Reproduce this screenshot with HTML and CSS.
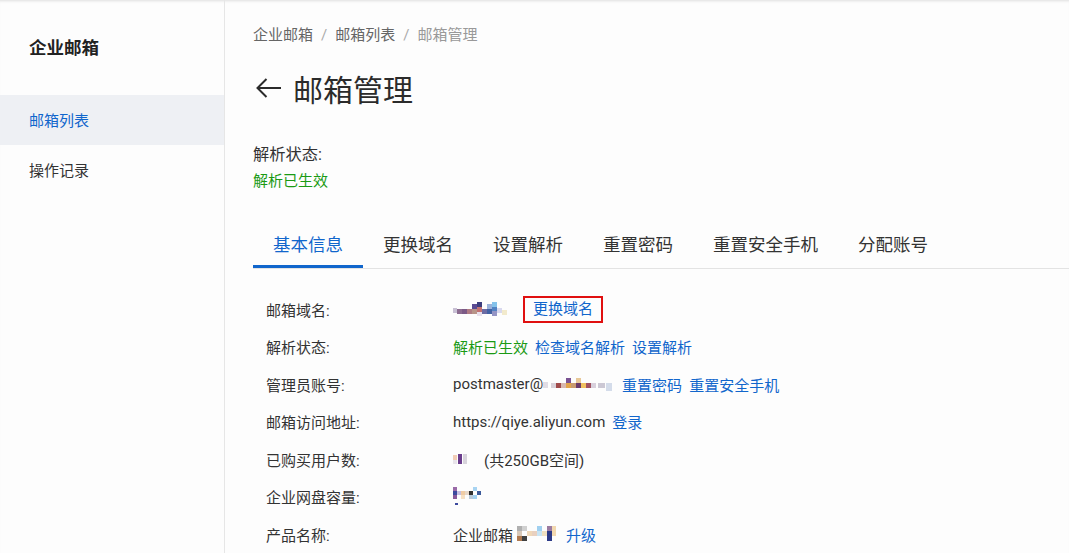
FILE: index.html
```html
<!DOCTYPE html>
<html lang="zh-CN">
<head>
	<meta charset="utf-8">
	<title>邮箱管理</title>
	<link rel="stylesheet" href="styles.css">
</head>
<body>
<div id="app">

	<div id="sidebar">
		<div class="side-title">企业邮箱</div>
		<div class="side-item active">邮箱列表</div>
		<div class="side-item">操作记录</div>
	</div>

	<div id="main">
		<div class="crumbs">
			<span class="crumb">企业邮箱</span><span class="sep">/</span><span class="crumb">邮箱列表</span><span class="sep">/</span><span class="crumb last">邮箱管理</span>
		</div>

		<div class="page-title">
			<svg class="back" width="26" height="22" viewBox="0 0 26 22"><path d="M26 11H2.5M11.5 2L2.5 11L11.5 20" fill="none" stroke="#2b2b2b" stroke-width="2"/></svg>
			<span>邮箱管理</span>
		</div>

		<div class="status-label">解析状态:</div>
		<div class="status-ok">解析已生效</div>

		<div class="tabs">
			<div class="tab active">基本信息</div>
			<div class="tab">更换域名</div>
			<div class="tab">设置解析</div>
			<div class="tab">重置密码</div>
			<div class="tab">重置安全手机</div>
			<div class="tab">分配账号</div>
		</div>

		<div class="info">
			<div class="row">
				<div class="label">邮箱域名:</div>
				<div class="value">
					<svg class="blur" width="62" height="16" viewBox="0 0 62 16">
						<rect x="0" y="7" width="4" height="5" fill="#c8c0d4"/>
						<rect x="4" y="8" width="5" height="5" fill="#8c6c90"/>
						<rect x="9" y="8" width="5" height="5" fill="#7c5a86"/>
						<rect x="14" y="8" width="5" height="5" fill="#b07c84"/>
						<rect x="19" y="3" width="5" height="5" fill="#5a4a92"/>
						<rect x="19" y="8" width="5" height="5" fill="#b89488"/>
						<rect x="24" y="1" width="5" height="5" fill="#3c3c7c"/>
						<rect x="24" y="6" width="5" height="5" fill="#c47272"/>
						<rect x="24" y="11" width="5" height="4" fill="#e8e0ec"/>
						<rect x="29" y="8" width="5" height="5" fill="#6c6ca4"/>
						<rect x="34" y="3" width="5" height="5" fill="#9cb2da"/>
						<rect x="34" y="8" width="5" height="5" fill="#4262a4"/>
						<rect x="39" y="1" width="5" height="5" fill="#84c2ea"/>
						<rect x="39" y="6" width="5" height="4" fill="#5282c2"/>
						<rect x="39" y="10" width="5" height="5" fill="#9494c4"/>
						<rect x="44" y="7" width="5" height="5" fill="#d8d8ee"/>
						<rect x="49" y="9" width="5" height="5" fill="#f2eacc"/>
					</svg>
					<span class="link boxed">更换域名</span>
				</div>
			</div>
			<div class="row">
				<div class="label">解析状态:</div>
				<div class="value">
					<span class="ok">解析已生效</span>
					<span class="link">检查域名解析</span>
					<span class="link">设置解析</span>
				</div>
			</div>
			<div class="row">
				<div class="label">管理员账号:</div>
				<div class="value">
					<span>postmaster@</span><svg class="blur tight" width="72" height="16" viewBox="0 0 72 16">
						<rect x="0" y="6" width="5" height="6" fill="#e0dce4"/>
						<rect x="8" y="7" width="5" height="5" fill="#d8d0d8"/>
						<rect x="13" y="7" width="5" height="5" fill="#a04a4a"/>
						<rect x="18" y="7" width="5" height="5" fill="#d8b8b0"/>
						<rect x="23" y="2" width="5" height="5" fill="#7a5292"/>
						<rect x="23" y="7" width="5" height="5" fill="#e2a44a"/>
						<rect x="28" y="7" width="5" height="5" fill="#c89a70"/>
						<rect x="33" y="2" width="5" height="5" fill="#e8c898"/>
						<rect x="33" y="7" width="5" height="5" fill="#6a3a6a"/>
						<rect x="38" y="7" width="5" height="5" fill="#f0c060"/>
						<rect x="43" y="7" width="5" height="5" fill="#a05060"/>
						<rect x="48" y="7" width="5" height="5" fill="#d8d0dc"/>
						<rect x="55" y="7" width="7" height="5" fill="#ccc8d4"/>
						<rect x="63" y="7" width="6" height="8" fill="#d4dcea"/>
					</svg>
					<span class="link">重置密码</span>
					<span class="link">重置安全手机</span>
				</div>
			</div>
			<div class="row">
				<div class="label">邮箱访问地址:</div>
				<div class="value">
					<span>https://qiye.aliyun.com</span>
					<span class="link">登录</span>
				</div>
			</div>
			<div class="row">
				<div class="label">已购买用户数:</div>
				<div class="value">
					<svg class="blur" width="16" height="16" viewBox="0 0 16 16">
						<rect x="0" y="4" width="4" height="5" fill="#f2cdb6"/>
						<rect x="0" y="9" width="4" height="4" fill="#e8e4ea"/>
						<rect x="5" y="3" width="4" height="10" fill="#6a3c8c"/>
						<rect x="10" y="3" width="4" height="10" fill="#d8d4dc"/>
					</svg>
					<span class="paren">(共250GB空间)</span>
				</div>
			</div>
			<div class="row">
				<div class="label">企业网盘容量:</div>
				<div class="value">
					<svg class="blur" width="30" height="20" viewBox="0 0 30 20">
						<rect x="0" y="0" width="4" height="4" fill="#9a6aa8"/>
						<rect x="0" y="4" width="4" height="4" fill="#3c4a9e"/>
						<rect x="0" y="8" width="4" height="4" fill="#8a5a9a"/>
						<rect x="4" y="4" width="4" height="4" fill="#c8c0e0"/>
						<rect x="8" y="4" width="4" height="4" fill="#f0cca4"/>
						<rect x="8" y="8" width="4" height="4" fill="#f6e0c4"/>
						<rect x="12" y="4" width="4" height="4" fill="#e8d8c8"/>
						<rect x="16" y="4" width="4" height="4" fill="#303030"/>
						<rect x="16" y="8" width="4" height="4" fill="#b8c8d8"/>
						<rect x="20" y="0" width="4" height="4" fill="#a8d4f2"/>
						<rect x="20" y="8" width="4" height="4" fill="#a0d0f0"/>
						<rect x="24" y="4" width="4" height="4" fill="#3c5a9a"/>
						<rect x="2" y="16" width="3" height="2" fill="#3c4a9e"/>
					</svg>
				</div>
			</div>
			<div class="row">
				<div class="label">产品名称:</div>
				<div class="value">
					<span>企业邮箱</span><svg class="blur tight" width="46" height="20" viewBox="0 0 46 20">
						<rect x="4" y="2" width="5" height="5" fill="#b0b0b0"/>
						<rect x="9" y="2" width="5" height="5" fill="#d0d0d0"/>
						<rect x="4" y="7" width="5" height="5" fill="#d8c8b8"/>
						<rect x="4" y="12" width="5" height="5" fill="#b07a50"/>
						<rect x="9" y="12" width="5" height="5" fill="#404040"/>
						<rect x="14" y="7" width="5" height="5" fill="#f0d8b8"/>
						<rect x="19" y="7" width="5" height="5" fill="#e8d0c0"/>
						<rect x="24" y="2" width="5" height="5" fill="#a0d0f0"/>
						<rect x="24" y="7" width="5" height="5" fill="#c8e4f4"/>
						<rect x="29" y="7" width="5" height="5" fill="#f0e0c0"/>
						<rect x="34" y="2" width="5" height="5" fill="#9a7aa0"/>
						<rect x="34" y="7" width="5" height="10" fill="#2c3a88"/>
						<rect x="39" y="2" width="4" height="10" fill="#f2d8b0"/>
					</svg>
					<span class="link">升级</span>
				</div>
			</div>
		</div>
	</div>

</div>
</body>
</html>
```

FILE: styles.css
```css
html, body {
	margin: 0;
	padding: 0;
}

body {
	background: #fdfdfd;
	color: #333;
	font-family: Roboto, "Noto Sans CJK SC", sans-serif;
	overflow: hidden;
}

#app {
	display: flex;
	height: 553px;
	box-shadow: inset 0 3px 3px -2px rgba(0, 0, 0, 0.12);
}

/* left menu */
#sidebar {
	width: 224px;
	flex: none;
	border-right: 1px solid #e6e6e6;
	padding-top: 36px;
}

.side-title {
	padding-left: 29px;
	font-size: 17.5px;
	font-weight: bold;
	line-height: 24px;
	color: #222;
	margin-bottom: 35px;
}

.side-item {
	height: 50px;
	line-height: 52px;
	padding-left: 29px;
	font-size: 15px;
	color: #333;
}

.side-item.active {
	background: #eef0f4;
	color: #1166cc;
}

/* content */
#main {
	flex: 1;
	padding: 25px 0 0 28px;
}

.crumbs {
	font-size: 15px;
	line-height: 20px;
	color: #666;
}

.sep {
	color: #aaa;
	padding: 0 8px;
}

.crumb.last {
	color: #999;
}

.page-title {
	display: flex;
	align-items: center;
	margin-top: 23px;
	height: 40px;
	font-size: 30px;
	color: #2b2b2b;
}

.back {
	margin: 0 12px 0 2px;
}

.status-label {
	margin-top: 35px;
	font-size: 16.25px;
	line-height: 24px;
	color: #333;
}

.status-ok {
	margin-top: 3px;
	font-size: 15px;
	line-height: 22px;
	color: #1a9a14;
}

.tabs {
	display: flex;
	margin-top: 32px;
	border-bottom: 1px solid #e3e3e3;
}

.tab {
	height: 41px;
	line-height: 42px;
	padding: 0 20px;
	font-size: 17.5px;
	color: #333;
	border-bottom: 3px solid transparent;
}

.tab.active {
	color: #1166cc;
	border-bottom-color: #1166cc;
}

.info {
	margin-top: 21px;
	padding-left: 13px;
}

.row {
	display: flex;
	align-items: center;
	height: 37.5px;
	font-size: 15px;
	padding-top: 1px;
	box-sizing: border-box;
}

.label {
	width: 187px;
	flex: none;
	color: #333;
}

.value {
	display: flex;
	align-items: center;
	gap: 7px;
	color: #333;
	white-space: nowrap;
}

.blur {
	display: block;
}

.blur.tight {
	margin-left: -7px;
}

.link {
	color: #1166cc;
}

.ok {
	color: #1a9a14;
}

.boxed {
	border: 2px solid #e01010;
	padding: 0 8px 0 8px;
	line-height: 23px;
	margin-left: 1px;
}

.paren {
	margin-left: 8px;
}
```
